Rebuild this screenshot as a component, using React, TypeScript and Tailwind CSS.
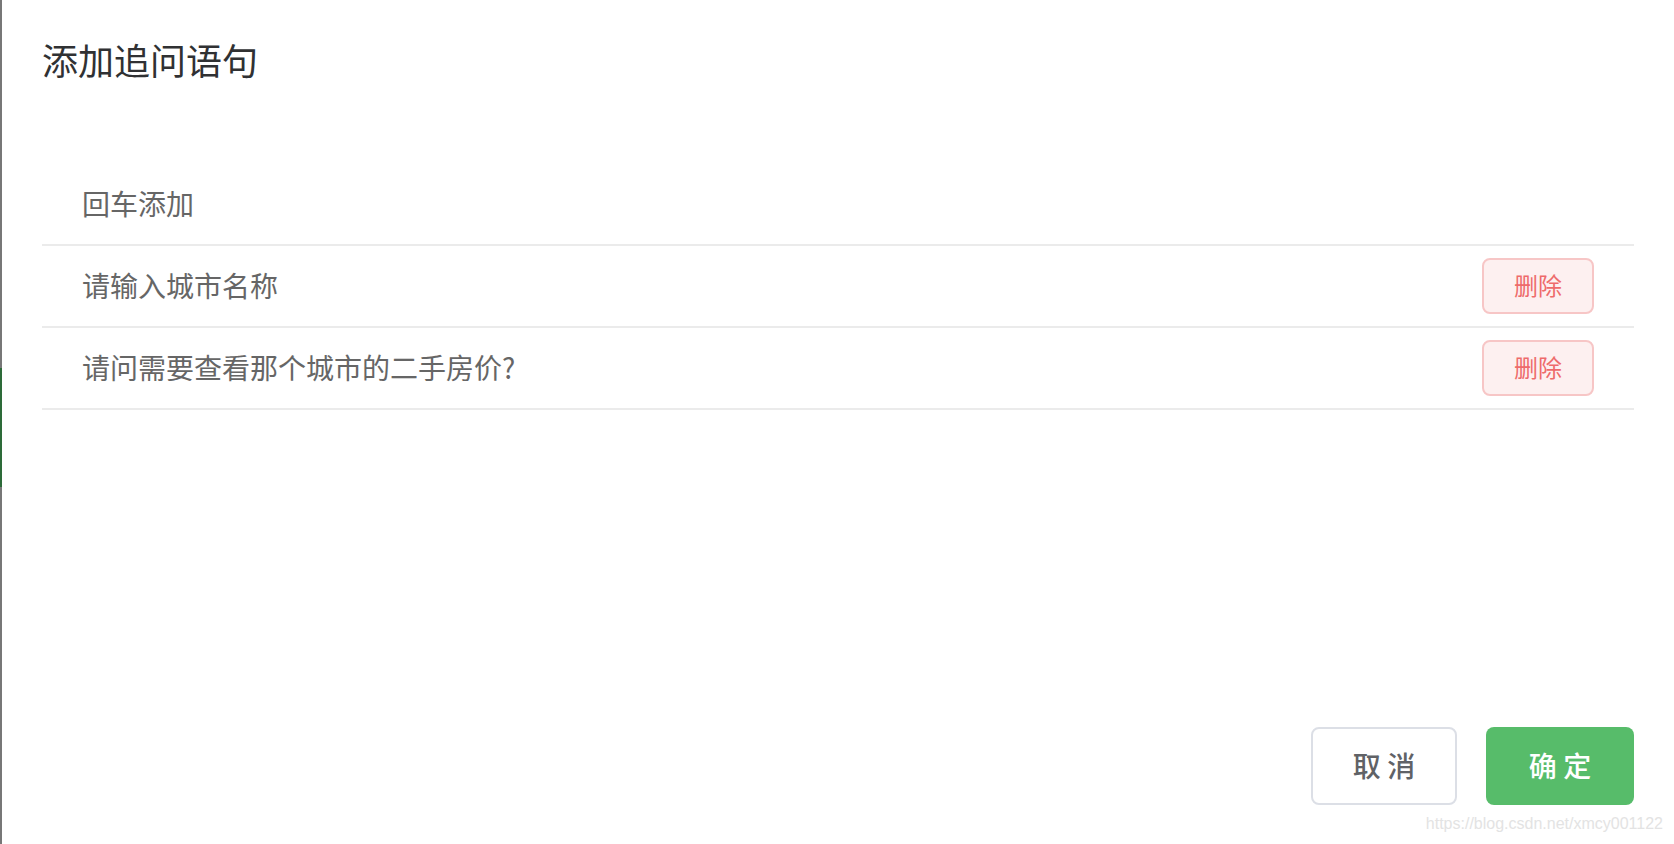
import React from "react";

const rows = ["请输入城市名称", "请问需要查看那个城市的二手房价?"];

function DeleteButton() {
  return (
    <button className="w-[112px] h-[56px] pb-[2px] rounded-[8px] border-2 border-[#f7c6c6] bg-[#fdf0f0] text-[#ee6b6b] text-[24px] leading-none">
      删除
    </button>
  );
}

export default function App() {
  return (
    <div
      className="relative flex w-full h-[844px] bg-white overflow-hidden"
      style={{ fontFamily: '"Noto Sans CJK SC", "Noto Sans", sans-serif' }}
    >
      {/* page edge behind the dialog */}
      <div className="flex flex-col w-[2px] h-full bg-[#777777]">
        <div className="h-[368px]" />
        <div className="h-[119px] bg-[#2d6b39]" />
      </div>

      <div className="flex flex-1 flex-col px-10">
        <div className="pt-[41px] h-[79px] text-[36px] leading-[36px] text-[#303133]">
          添加追问语句
        </div>

        <div className="mt-[85px] flex flex-col">
          <div className="h-[82px] border-b-2 border-[#ebebeb] flex items-center px-10">
            <input
              className="w-full mb-[3px] text-[28px] text-[#666666] outline-none bg-transparent"
              defaultValue="回车添加"
            />
          </div>
          {rows.map((r) => (
            <div
              key={r}
              className="h-[82px] border-b-2 border-[#ebebeb] flex items-center justify-between px-10"
            >
              <span className="mb-[3px] text-[28px] text-[#666666]">{r}</span>
              <DeleteButton />
            </div>
          ))}
        </div>

        <div className="mt-auto pb-[39px] flex justify-end gap-[29px]">
          <button className="w-[146px] h-[78px] pb-[2px] rounded-[8px] border-2 border-[#dcdfe6] bg-white text-[28px] font-medium text-[#606266]">
            取 消
          </button>
          <button className="w-[148px] h-[78px] pb-[2px] rounded-[8px] bg-[#57bc6a] text-[28px] font-medium text-white">
            确 定
          </button>
        </div>
      </div>

      <span
        className="absolute right-[11px] bottom-[8px] text-[16px] text-[#e3e3e3]"
        style={{ fontFamily: '"Liberation Sans", Arial, sans-serif' }}
      >
        https://blog.csdn.net/xmcy001122
      </span>
    </div>
  );
}
